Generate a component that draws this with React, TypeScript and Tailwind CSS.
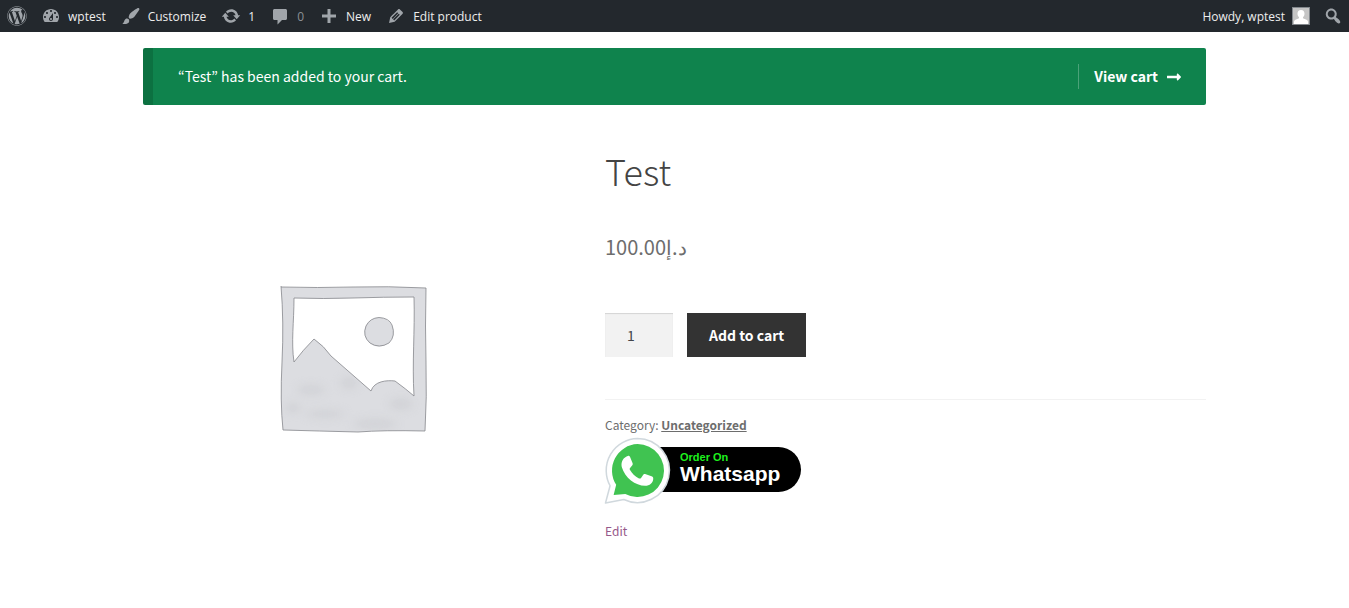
import type { ReactNode } from "react";
import { FaLongArrowAltRight, FaWordpress } from "react-icons/fa";

const paths = {
  dashboard:
    "M3.76 16h12.48c1.1-1.37 1.76-3.11 1.76-5 0-4.42-3.58-8-8-8s-8 3.58-8 8c0 1.89.66 3.63 1.76 5zM10 4c.55 0 1 .45 1 1s-.45 1-1 1-1-.45-1-1 .45-1 1-1zM6 6c.55 0 1 .45 1 1s-.45 1-1 1-1-.45-1-1 .45-1 1-1zm8 0c.55 0 1 .45 1 1s-.45 1-1 1-1-.45-1-1 .45-1 1-1zm-5.37 5.55L12 7v6c0 1.1-.9 2-2 2s-2-.9-2-2c0-.57.24-1.08.63-1.45zM4 10c.55 0 1 .45 1 1s-.45 1-1 1-1-.45-1-1 .45-1 1-1zm12 0c.55 0 1 .45 1 1s-.45 1-1 1-1-.45-1-1 .45-1 1-1zm-5 3c0-.55-.45-1-1-1s-1 .45-1 1 .45 1 1 1 1-.45 1-1z",
  brush:
    "M18.33 3.57s.27-.8-.31-1.36c-.53-.52-1.22-.24-1.22-.24-.61.3-5.76 3.47-7.67 5.57-.86.96-2.06 3.79-1.09 4.82.92.98 3.96-.17 4.79-1 2.06-2.06 5.21-7.17 5.5-7.79zM1.4 17.65c2.37-1.56 1.46-3.41 3.23-4.64.93-.65 2.22-.62 3.08.29.63.67.8 2.57-.16 3.46-1.57 1.45-4 1.55-6.15.89z",
  update:
    "M10.2 3.28c3.53 0 6.43 2.61 6.92 6h2.08l-3.5 4-3.5-4h2.32c-.45-1.97-2.21-3.45-4.32-3.45-1.45 0-2.73.71-3.54 1.78L4.95 5.66C6.23 4.2 8.11 3.28 10.2 3.28zm-.4 13.44c-3.52 0-6.43-2.61-6.92-6H.8l3.5-4c1.17 1.33 2.33 2.67 3.5 4H5.48c.45 1.97 2.21 3.45 4.32 3.45 1.45 0 2.73-.71 3.54-1.78l1.71 1.95c-1.28 1.46-3.15 2.38-5.25 2.38z",
  comment:
    "M4.5 3h11c.8 0 1.5.7 1.5 1.5v8c0 .8-.7 1.5-1.5 1.5H12l-4.5 4.5V14h-3c-.8 0-1.5-.7-1.5-1.5v-8C3 3.7 3.7 3 4.500 3z",
  plus: "M17 8.500v3h-5.500V17h-3v-5.500H3v-3h5.500V3h3v5.500z",
  edit: "M13.89 3.39l2.71 2.72c.46.46.42 1.24.03 1.64l-8.01 8.02-5.56 1.16 1.16-5.58s7.6-7.63 7.99-8.03c.39-.39 1.22-.39 1.68.07zm-2.73 2.79l-5.59 5.61 1.11 1.11 5.54-5.65zm-2.97 8.23l5.58-5.6-1.07-1.08-5.59 5.6z",
  search:
    "M12.14 4.18c1.87 1.87 2.11 4.75.72 6.89.12.1.22.21.36.31.2.16.47.36.81.59.34.24.56.39.66.47.42.31.73.57.94.78.32.32.6.65.84 1 .25.35.44.69.59 1.04.14.35.21.68.18 1-.02.32-.14.59-.36.81s-.49.34-.81.36c-.31.02-.65-.04-.99-.19-.35-.14-.7-.34-1.04-.59-.35-.24-.68-.52-1-.84-.21-.21-.47-.52-.77-.93-.1-.13-.25-.35-.47-.66-.22-.32-.4-.57-.56-.78-.16-.2-.29-.35-.44-.5-2.07 1.09-4.69.76-6.44-.98-2.14-2.15-2.14-5.64 0-7.78 2.15-2.15 5.63-2.15 7.78 0zm-1.41 6.36c1.36-1.37 1.36-3.58 0-4.95-1.37-1.37-3.59-1.37-4.95 0-1.37 1.37-1.37 3.58 0 4.95 1.36 1.37 3.58 1.37 4.95 0z",
};

function BarIcon({ name }: { name: keyof typeof paths }) {
  return (
    <svg viewBox="0 0 20 20" className="size-5 shrink-0 fill-[#a0a5aa]" aria-hidden="true">
      <path d={paths[name]} fillRule="evenodd" />
    </svg>
  );
}

function BarLink({ icon, children }: { icon: keyof typeof paths; children: ReactNode }) {
  return (
    <a href="#" className="flex items-center gap-[7px] pr-2 pl-[7px]">
      <BarIcon name={icon} />
      <span className="pt-px">{children}</span>
    </a>
  );
}

function AdminBar() {
  return (
    <nav
      aria-label="Toolbar"
      className="flex h-8 items-center justify-between bg-[#23282d] font-['Open_Sans',sans-serif] text-xs font-medium text-[#eee]"
    >
      <div className="flex items-center">
        <a href="#" aria-label="About WordPress" className="px-[7px]">
          <FaWordpress className="size-5 text-[#a0a5aa]" />
        </a>
        <BarLink icon="dashboard">wptest</BarLink>
        <BarLink icon="brush">Customize</BarLink>
        <BarLink icon="update">1</BarLink>
        <BarLink icon="comment">
          <span className="text-[#8b9095]">0</span>
        </BarLink>
        <BarLink icon="plus">New</BarLink>
        <BarLink icon="edit">Edit product</BarLink>
      </div>
      <div className="flex items-center">
        <a href="#" className="flex items-center gap-[7px] pr-[7px] pl-2">
          <span className="pt-px">Howdy, wptest</span>
          <svg viewBox="0 0 18 18" className="size-[18px]" aria-hidden="true">
            <rect width="18" height="18" fill="#82878c" />
            <rect x="1" y="1" width="16" height="16" fill="#c5c5c5" />
            <path d="M9 3c2.300 0 3.500 1.600 3.500 3.700 0 1.600-.6 2.700-1.500 3.500v1l3.500 1.500c1 .5 1.500 1.300 1.500 2.300v2H2v-2c0-1 .5-1.800 1.500-2.300L7 11.200v-1C6.100 9.400 5.500 8.300 5.500 6.700 5.500 4.600 6.700 3 9 3z" fill="#fff" />
          </svg>
        </a>
        <button type="button" aria-label="Search" className="px-1.5">
          <BarIcon name="search" />
        </button>
      </div>
    </nav>
  );
}

function Placeholder() {
  return (
    <svg viewBox="0 0 416 416" className="w-full" role="img" aria-label="Awaiting product image">
      <defs>
        <filter id="soft" x="-50%" y="-50%" width="200%" height="200%">
          <feGaussianBlur stdDeviation="4" />
        </filter>
        <clipPath id="hills">
          <path d="M140 210L171 189L228 241L252 231L282 250V278H140z" />
        </clipPath>
      </defs>
      <g fill="#dcdde1" fillRule="evenodd">
        <path d="M138 135Q175 136 210 135T283 136Q282 175 283 210T282 279Q240 278 215 280Q175 279 140 278Q137 250 139 210T138 135zM151 146C151 170 148 190 151 210Q160 198 171 187Q181 194 188 204L228 239C231 229 244 228 252 229Q263 237 271 244C269 210 272 180 271 145Q240 145 210 146T151 146z" />
        <circle cx="236" cy="180" r="14.500" />
      </g>
      <g clipPath="url(#hills)">
        <g fill="#c8c9ce" filter="url(#soft)" opacity="0.5">
          <ellipse cx="168" cy="238" rx="14" ry="5" />
          <ellipse cx="206" cy="231" rx="9" ry="6" />
          <ellipse cx="182" cy="262" rx="20" ry="4" />
          <ellipse cx="232" cy="272" rx="22" ry="5" />
          <ellipse cx="258" cy="252" rx="12" ry="6" />
          <ellipse cx="150" cy="256" rx="8" ry="5" />
        </g>
      </g>
      <g fill="none" stroke="#85868b" strokeWidth="0.8" strokeLinejoin="round">
        <path d="M138 135Q175 136 210 135T283 136Q282 175 283 210T282 279Q240 278 215 280Q175 279 140 278Q137 250 139 210T138 134" />
        <path d="M151 146C151 170 148 190 151 210Q160 198 171 187Q181 194 188 204L228 239C231 229 244 228 252 229Q263 237 271 244C269 210 272 180 271 145Q240 145 210 146T151 146z" />
        <path d="M236 165.500Q246 166 249 173Q253 184 246 191Q236 197 227 191Q219 184 223 174Q227 166 236 165.500z" />
      </g>
    </svg>
  );
}

function WhatsappButton() {
  return (
    <a href="#" className="flex w-max items-center font-['Liberation_Sans',sans-serif] font-bold">
      <svg viewBox="1 -2 65 65" className="relative size-[66px] overflow-visible" aria-hidden="true">
        <path d="M33 .5a31.500 31.500 0 1 1-13.500 60L1.500 64l4.500-17A31.500 31.500 0 0 1 33 .5z" fill="#fff" stroke="#d0d8dd" strokeWidth="1.500" strokeLinejoin="round" />
        <path d="M33 6a26 26 0 1 1-12 49L9.500 56l2.500-10A26 26 0 0 1 33 6z" fill="#40c351" />
        <path d="M24 17.500c-5 1.500-7.500 6-6.500 11 3 10.500 13.500 18.500 23 18.500 4.500 0 8-3 8-7 0-1-.3-1.500-1-2l-7-2.500c-1-.3-1.500 0-2 .8l-2 3c-.5.700-1.200.8-2 .5-4-2-7-5-9-8.500-.4-.8-.2-1.500.4-2.100l2-2.400c.5-.6.6-1.200.3-2l-2.500-6c-.4-1-1-1.300-1.700-1.300z" fill="#fff" />
      </svg>
      <span className="-ml-6 flex h-[45px] flex-col rounded-r-full bg-black pt-1 pr-[21px] pl-[33px]">
        <span className="text-[11px] leading-3 text-[#1df01d]">Order On</span>
        <span className="text-[21px] leading-[22px] text-white">Whatsapp</span>
      </span>
    </a>
  );
}

export default function App() {
  return (
    <div className="min-h-screen bg-white font-['Noto_Sans_CJK_KR','Noto_Sans',sans-serif] text-[14px] text-[#6d6d6d]">
      <AdminBar />
      <main className="mx-auto max-w-[1063px] pt-4">
        <div
          role="alert"
          className="flex items-center justify-between rounded-xs border-l-10 border-[#0c7141] bg-[#0f834d] py-4 pr-6 pl-[25px] text-white"
        >
          <span>“Test” has been added to your cart.</span>
          <a href="#" className="flex h-[25px] items-center gap-2 border-l border-white/25 pl-[15px] font-bold">
            View cart
            <FaLongArrowAltRight className="size-4" />
          </a>
        </div>

        <div className="grid grid-cols-[416fr_601fr] gap-x-[46px] pt-[47px]">
          <Placeholder />
          <div className="flex flex-col items-start">
            <h1 className="text-[36px] leading-9 font-extralight text-[#444]">Test</h1>
            <p dir="ltr" className="mt-[43px] text-[20px] leading-8">
              100.00<bdi>د.إ</bdi>
            </p>
            <form className="mt-[50px] flex gap-3.5" onSubmit={(e) => e.preventDefault()}>
              <input
                type="text"
                inputMode="numeric"
                aria-label="Product quantity"
                defaultValue="1"
                className="h-11 w-[68px] bg-[#f2f2f2] pr-3 pl-[22px] text-[#43454b] shadow-[inset_0_1px_1px_rgba(0,0,0,0.125)]"
              />
              <button type="submit" className="h-11 bg-[#333] px-[22px] font-bold text-white">
                Add to cart
              </button>
            </form>
            <div className="mt-[42px] w-full border-t border-[#f2f2f2] pt-[15px] pb-px text-xs leading-5">
              Category:{" "}
              <a href="#" className="font-bold underline">
                Uncategorized
              </a>
            </div>
            <WhatsappButton />
            <a href="#" className="mt-[19px] text-xs leading-5 text-[#96588a]">
              Edit
            </a>
          </div>
        </div>
      </main>
    </div>
  );
}
